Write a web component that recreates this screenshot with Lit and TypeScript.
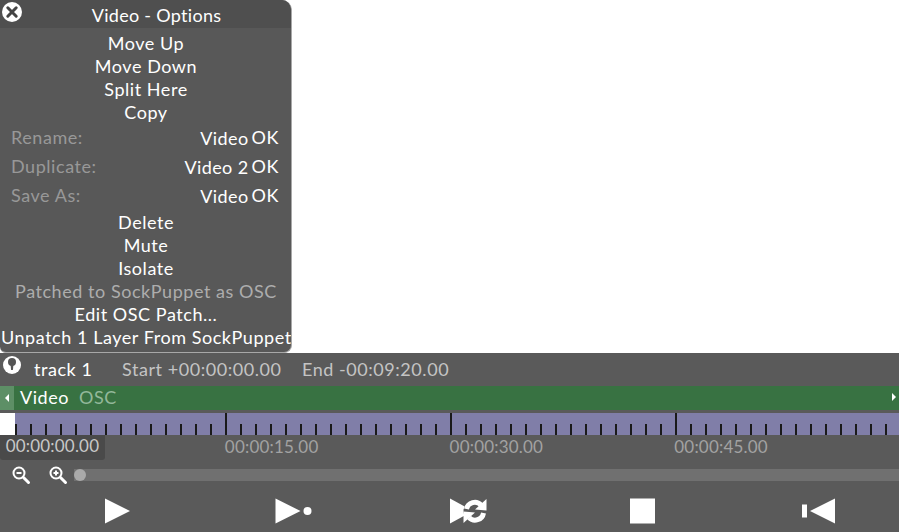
import { LitElement, html, css, svg } from "lit";
import { customElement } from "lit/decorators.js";

@customElement("app-root")
export class AppRoot extends LitElement {
  static styles = css`
    :host {
      display: block;
      width: 899px;
      height: 532px;
      overflow: hidden;
      background: #fff;
      font-family: Lato, "Liberation Sans", sans-serif;
      font-size: 18px;
      letter-spacing: 0.55px;
      color: #fff;
    }
    .root { display: flex; flex-direction: column; height: 532px; }
    .top { height: 353px; flex: none; background: #fff; }
    .panel {
      position: relative;
      box-sizing: border-box;
      width: 292px;
      height: 353px;
      background: #585858;
      border-right: 1px solid #a8a8a8;
      border-bottom: 1px solid #a8a8a8;
      border-radius: 0 10px 8px 6px;
      overflow: hidden;
    }
    .head {
      height: 28px;
      background: #4f4f4f;
      display: flex;
      align-items: center;
      justify-content: center;
      padding: 2px 0 0 22px;
      box-sizing: border-box;
      margin-bottom: 4px;
      letter-spacing: 0.3px;
    }
    .close { position: absolute; left: 2px; top: 2px; width: 20px; height: 20px; }
    .item { height: 23px; line-height: 23px; padding-left: 1px; text-align: center; white-space: nowrap; }
    .muted { color: #adadad; }
    .form {
      height: 29px;
      display: flex;
      align-items: center;
      padding: 0 12px 4px 11px;
      box-sizing: border-box;
    }
    .form .lab { flex: 1; color: #989898; }
    .form .val { margin-right: 3px; padding-top: 2px; letter-spacing: 0.4px; }
    .bottom { flex: 1; background: #5a5a5a; display: flex; flex-direction: column; }
    .track {
      height: 33px;
      display: flex;
      align-items: center;
      padding-bottom: 2px;
      box-sizing: border-box;
      position: relative;
      color: #c4c4c4;
    }
    .pin { position: absolute; left: 3px; top: 3px; width: 18px; height: 18px; }
    .tname { margin-left: 34px; width: 88px; color: #fff; }
    .tstart { width: 180px; }
    .green {
      height: 24px;
      background: #387242;
      display: flex;
      align-items: center;
      padding-bottom: 2px;
      box-sizing: border-box;
    }
    .arrow { width: 14px; height: 24px; margin-bottom: -2px; background: #5d8f66; display: flex; align-items: center; justify-content: center; }
    .arrow svg { width: 6px; height: 8px; }
    .gname { margin-left: 6px; }
    .gosc { margin-left: 10px; color: #93b89a; }
    .end { margin-left: auto; width: 8px; display: flex; }
    .end svg { width: 6px; height: 8px; }
    .ruler {
      margin-top: 3px;
      height: 22px;
      display: flex;
      flex: none;
    }
    .white { width: 15px; background: #fff; }
    .ticks {
      flex: 1;
      background-color: #807ea8;
      background-image:
        repeating-linear-gradient(90deg, #1a1a1a 0 2px, transparent 2px 225px),
        repeating-linear-gradient(90deg, #1a1a1a 0 2px, transparent 2px 15px);
      background-size: 100% 100%, 100% 11px;
      background-position: 210px 0, 0 100%;
      background-repeat: no-repeat;
    }
    .times { height: 25px; display: flex; align-items: center; color: #a2a2a2; font-size: 17px; letter-spacing: 0.2px; padding-bottom: 2px; box-sizing: border-box; flex: none; }
    .now {
      width: 105px;
      height: 25px;
      margin-bottom: -2px;
      line-height: 22px;
      background: #4a4a4a;
      border-radius: 0 0 3px 3px;
      color: #c8c8c8;
      text-align: center;
      box-sizing: border-box;
      margin-right: 120px;
    }
    .stamp { width: 225px; }
    .zoom { height: 30px; display: flex; align-items: center; flex: none; box-sizing: border-box; }
    .zoom svg { width: 22px; height: 22px; flex: none; }
    .z1 { margin-left: 10px; }
    .z2 { margin-left: 15px; }
    .track-bar { flex: 1; height: 12px; background: #707070; margin-left: 5px; position: relative; }
    .knob { position: absolute; left: 0; top: 0; width: 12px; height: 12px; border-radius: 50%; background: #aaa; }
    .transport { flex: 1; display: flex; align-items: center; padding: 0 0 0 29px; box-sizing: border-box; }
    .slot { width: 175.500px; flex: none; display: flex; justify-content: center; }
    .slot svg { width: 46px; height: 30px; display: block; }
  `;

  render() {
    const arrowL = svg`<polygon points="5,0 5,8 1,4" fill="#fff"/>`;
    const arrowR = svg`<polygon points="1,0 1,8 5,4" fill="#fff"/>`;
    const form = (l: string, v: string) => html`<div class="form"><span class="lab">${l}</span><span class="val">${v}</span><span>OK</span></div>`;
    return html`<div class="root">
      <div class="top">
        <div class="panel">
          <svg class="close" viewBox="0 0 20 20">
            <circle cx="10" cy="10" r="10" fill="#fff"/>
            <path d="M5.800 5.800 14.200 14.200M14.200 5.800 5.800 14.200" stroke="#444" stroke-width="3" stroke-linecap="round"/>
          </svg>
          <div class="head">Video - Options</div>
          <div class="item">Move Up</div>
          <div class="item">Move Down</div>
          <div class="item">Split Here</div>
          <div class="item">Copy</div>
          ${form("Rename:", "Video")}
          ${form("Duplicate:", "Video 2")}
          ${form("Save As:", "Video")}
          <div class="item">Delete</div>
          <div class="item">Mute</div>
          <div class="item">Isolate</div>
          <div class="item muted">Patched to SockPuppet as OSC</div>
          <div class="item">Edit OSC Patch...</div>
          <div class="item">Unpatch 1 Layer From SockPuppet</div>
        </div>
      </div>
      <div class="bottom">
        <div class="track">
          <svg class="pin" viewBox="0 0 18 18">
            <circle cx="9" cy="9" r="9" fill="#fff"/>
            <circle cx="9" cy="6" r="4" fill="#555"/>
            <path fill="#555" d="M7.500 8h3l-.6 6h-1.800Z"/>
          </svg>
          <span class="tname">track 1</span>
          <span class="tstart">Start +00:00:00.00</span>
          <span>End -00:09:20.00</span>
        </div>
        <div class="green">
          <div class="arrow"><svg viewBox="0 0 6 8">${arrowL}</svg></div>
          <span class="gname">Video</span>
          <span class="gosc">OSC</span>
          <div class="end"><svg viewBox="0 0 6 8">${arrowR}</svg></div>
        </div>
        <div class="ruler"><div class="white"></div><div class="ticks"></div></div>
        <div class="times">
          <div class="now">00:00:00.00</div>
          <div class="stamp">00:00:15.00</div>
          <div class="stamp">00:00:30.00</div>
          <div class="stamp">00:00:45.00</div>
        </div>
        <div class="zoom">
          <svg class="z1" viewBox="0 0 22 22">
            <circle cx="9" cy="9" r="5.500" fill="none" stroke="#fff" stroke-width="2"/>
            <path d="M13.500 13.500 18.500 18.500" stroke="#fff" stroke-width="3" stroke-linecap="round"/>
            <path d="M6.500 9H11.500" stroke="#fff" stroke-width="2"/>
          </svg>
          <svg class="z2" viewBox="0 0 22 22">
            <circle cx="9" cy="9" r="5.500" fill="none" stroke="#fff" stroke-width="2"/>
            <path d="M13.500 13.500 18.500 18.500" stroke="#fff" stroke-width="3" stroke-linecap="round"/>
            <path d="M6.500 9H11.500M9 6.500V11.500" stroke="#fff" stroke-width="2"/>
          </svg>
          <div class="track-bar"><div class="knob"></div></div>
        </div>
        <div class="transport">
          <div class="slot"><svg viewBox="0 0 46 30"><polygon points="11,2.500 36,15 11,27.500" fill="#fff"/></svg></div>
          <div class="slot"><svg viewBox="0 0 46 30"><polygon points="6.500,2.500 31.500,15 6.500,27.500" fill="#fff"/><circle cx="38.500" cy="15" r="4" fill="#fff"/></svg></div>
          <div class="slot"><svg viewBox="0 0 46 30">
            <polygon points="5,2.500 28,15 5,27.500" fill="#fff"/>
            <circle cx="30" cy="15" r="11.500" fill="#5a5a5a"/>
            <path d="M21.500 13A8.500 8.500 0 0 1 36 9" fill="none" stroke="#fff" stroke-width="5"/>
            <polygon points="41.500,3 41.500,14.500 30,13.500" fill="#fff"/>
            <path d="M38.500 17A8.500 8.500 0 0 1 24 21.500" fill="none" stroke="#fff" stroke-width="5"/>
            <polygon points="18.500,27 18.500,15.500 30,16.500" fill="#fff"/>
          </svg></div>
          <div class="slot"><svg viewBox="0 0 46 30"><rect x="10" y="2.500" width="25" height="25" fill="#fff"/></svg></div>
          <div class="slot"><svg viewBox="0 0 46 30"><rect x="6" y="8.500" width="5" height="13" fill="#fff"/><polygon points="39,2.500 14,15 39,27.500" fill="#fff"/></svg></div>
        </div>
      </div>
    </div>`;
  }
}
